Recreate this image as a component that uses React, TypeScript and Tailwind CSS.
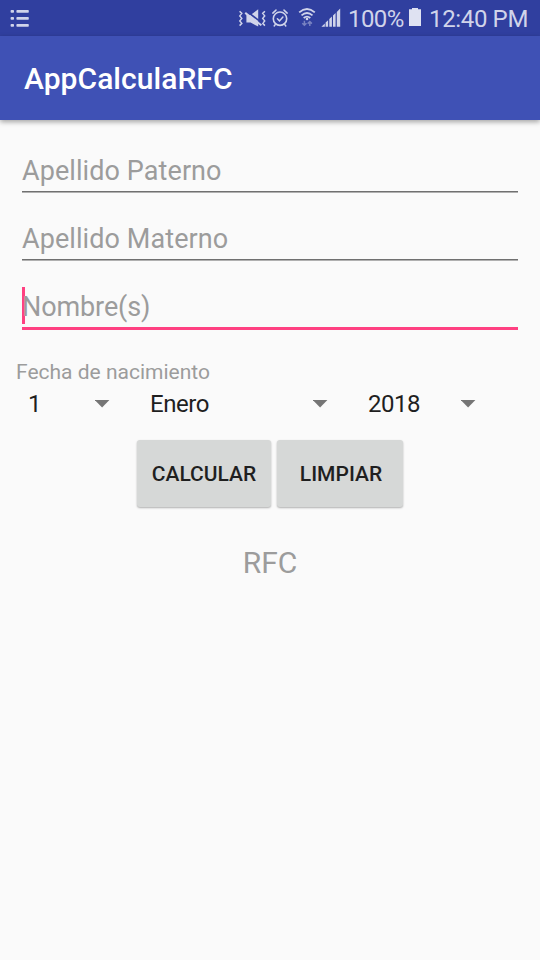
import React from 'react';

function StatusBar() {
  return (
    <header className="flex h-9 shrink-0 items-center bg-[#303f9f] text-[#d0d4ea]">
      <svg className="ml-[10px] shrink-0" width="20" height="20" viewBox="0 0 20 20" fill="currentColor">
        {[2, 9, 16].map((y) => (
          <g key={y}>
            <rect x="0.6" y={y} width="3.4" height="2.8" rx="0.8" />
            <rect x="6.4" y={y} width="12.4" height="2.8" rx="0.8" />
          </g>
        ))}
      </svg>
      <div className="flex-1" />
      <svg className="shrink-0" width="29" height="36" viewBox="238 0 29 36" fill="none" stroke="currentColor">
        <path d="M239.6 11.2l2.2 2.2-2 2.5 2 2.5-2 2.5 2 2.5-2.2 2.2M264.9 11.2l-2.2 2.2 2 2.5-2 2.5 2 2.5-2 2.5 2.2 2.2" strokeWidth="1.5" />
        <path d="M246.4 15h4.2l7.6-5.8v17.4L250.6 22.6h-4.2z" fill="currentColor" stroke="none" />
        <path d="M246.2 10.9L262.2 23.1" stroke="#303f9f" strokeWidth="1.6" />
        <path d="M245.2 12.9L261.4 25.3" strokeWidth="2" />
      </svg>
      <svg className="ml-[4px] shrink-0" width="19" height="36" viewBox="271 0 19 36" fill="none" stroke="currentColor" strokeLinecap="round">
        <circle cx="280" cy="18.7" r="6.7" strokeWidth="1.6" />
        <path d="M272.8 13.1l3.2-3M287.2 13.1l-3.2-3M275.2 24.6l-1 1.4M284.8 24.6l1 1.4" strokeWidth="1.5" />
        <path d="M277.4 18.8l2.1 2.1 3.4-3.8" strokeWidth="1.5" />
      </svg>
      <svg className="ml-[8px] shrink-0" width="19" height="36" viewBox="298 0 19 36" fill="none" stroke="currentColor">
        <path d="M299.2 12.4q7.8-6.8 15.6 0M301.5 15.4q5.5-4.8 11 0M303.7 18q3.3-2.8 6.6 0" strokeWidth="1.8" />
        <circle cx="307" cy="19" r="1.3" fill="currentColor" stroke="none" />
        <path d="M304.4 20.8v4.4M302.3 23.2l2.1 2.1 2.1-2.1M309.8 26v-4.2M307.7 23.6l2.1-2.1 2.1 2.1" strokeWidth="1.5" opacity="0.45" />
      </svg>
      <svg className="ml-[4px] shrink-0" width="20" height="36" viewBox="321 0 20 36" fill="currentColor">
        <path d="M321.4 26.7l3.4-3.2v3.2zM325.6 22.6l2.5-2.4v6.5h-2.5zM329.3 19l2.6-2.5v10.2h-2.6zM333 15.5l2.6-2.5v13.7H333zM336.8 11.9l3.4-3.3v18.1h-3.4z" />
      </svg>
      <span className="ml-[7px] w-[61px] whitespace-nowrap pt-0.5 text-[24px] leading-9 tracking-[-0.6px]">100%</span>
      <svg className="shrink-0" width="12" height="36" viewBox="409 0 12 36" fill="#dfe2f2">
        <path d="M412 8h6v1.2h3V26h-12V9.2h3z" />
      </svg>
      <span className="ml-[8px] w-[111px] whitespace-nowrap pt-0.5 text-[24px] leading-9 tracking-[-0.35px]">12:40 PM</span>
    </header>
  );
}

function Field({ label, focused = false }: { label: string; focused?: boolean }) {
  return (
    <div className="h-[68px] px-[22px] pt-[15px]">
      <div className={`relative pt-1 ${focused ? 'h-[43px] border-b-[3px] border-[#ff4081]' : 'h-[42px] border-b border-[#b0b0b0]'}`}>
        {focused && <span className="absolute left-0 top-0 h-[37px] w-[3px] bg-[#ff4081]" />}
        <span
          className={`relative block whitespace-nowrap text-[27px] leading-8 text-[#9c9c9c] ${focused ? 'tracking-[-0.1px]' : 'tracking-[0.08px]'}`}
        >
          {label}
        </span>
        {!focused && <div className="mt-1 h-px bg-[#707070]" />}
      </div>
    </div>
  );
}

function Spinner({ value, className }: { value: string; className: string }) {
  return (
    <div className={`flex items-center justify-between ${className}`}>
      <span className="text-[24px] leading-7 tracking-[-0.45px]">{value}</span>
      <svg width="15" height="8" viewBox="0 0 15 8" fill="#757575">
        <path d="M-0.2 0h14.6L7.1 7.4z" />
      </svg>
    </div>
  );
}

function Button({ label, className }: { label: string; className: string }) {
  return (
    <button
      className={`h-[67px] rounded-[3px] bg-[#d6d8d7] pt-0.5 text-[21px] font-medium leading-[25px] text-[#1f1f1f] shadow-[0_1px_2px_rgba(0,0,0,0.3)] ${className}`}
    >
      {label}
    </button>
  );
}

export default function App() {
  return (
    <div className="flex h-[960px] w-[540px] flex-col overflow-hidden bg-[#fafafa] font-[Roboto,sans-serif]">
      <StatusBar />
      <div className="flex h-[84px] shrink-0 items-center bg-[#3f51b5] px-6 pt-0.5 shadow-[0_2px_5px_rgba(0,0,0,0.35)]">
        <h1 className="text-[30px] font-medium leading-9 tracking-[0.05px] text-white">AppCalculaRFC</h1>
      </div>
      <main className="flex flex-col pt-4">
        <Field label="Apellido Paterno" />
        <Field label="Apellido Materno" />
        <Field label="Nombre(s)" focused />
        <p className="mt-5 px-4 text-[21px] leading-[25px] text-[#9c9c9c]">Fecha de nacimiento</p>
        <div className="mt-[5px] flex text-[#1f1f1f]">
          <Spinner value="1" className="ml-7 w-[82px]" />
          <Spinner value="Enero" className="ml-10 w-[178px]" />
          <Spinner value="2018" className="ml-10 w-[108px]" />
        </div>
        <div className="mt-[22px] ml-[137px] flex gap-[6px]">
          <Button label="CALCULAR" className="w-[134px]" />
          <Button label="LIMPIAR" className="w-[126px] pl-[2px]" />
        </div>
        <p className="mt-[38px] text-center text-[30px] leading-9 text-[#9c9c9c]">RFC</p>
      </main>
    </div>
  );
}
